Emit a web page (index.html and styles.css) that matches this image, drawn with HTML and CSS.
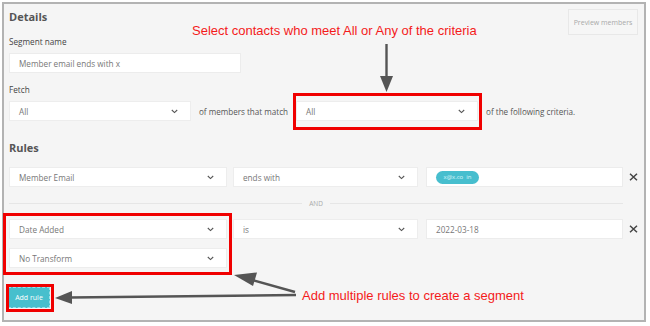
FILE: index.html
```html
<!DOCTYPE html>
<html>
<head>
<meta charset="utf-8">
<link rel="stylesheet" href="styles.css">
</head>
<body>
<div class="frame">
  <div class="head">
    <h2 class="title">Details</h2>
    <div class="preview">Preview members</div>
  </div>
  <div class="lbl">Segment name</div>
  <div class="input name">Member email ends with x</div>
  <div class="lbl lbl-fetch">Fetch</div>
  <div class="fetch-row">
    <div class="sel w182"><span>All</span><svg class="chev" width="7" height="5" viewBox="0 0 7 5"><path d="M0.8 1 L3.5 3.6 L6.2 1" fill="none" stroke="#555" stroke-width="1.1"/></svg></div>
    <span class="txt">of members that match</span>
    <div class="sel w182 hl hl-fetch"><span>All</span><svg class="chev" width="7" height="5" viewBox="0 0 7 5"><path d="M0.8 1 L3.5 3.6 L6.2 1" fill="none" stroke="#555" stroke-width="1.1"/></svg></div>
    <span class="txt">of the following criteria.</span>
  </div>
  <h2 class="title rules">Rules</h2>
  <div class="rule-row first">
    <div class="col1">
      <div class="sel"><span>Member Email</span><svg class="chev" width="7" height="5" viewBox="0 0 7 5"><path d="M0.8 1 L3.5 3.6 L6.2 1" fill="none" stroke="#555" stroke-width="1.1"/></svg></div>
    </div>
    <div class="sel w185"><span>ends with</span><svg class="chev" width="7" height="5" viewBox="0 0 7 5"><path d="M0.8 1 L3.5 3.6 L6.2 1" fill="none" stroke="#555" stroke-width="1.1"/></svg></div>
    <div class="input val"><span class="chip">x@x.co &nbsp;in</span></div>
    <div class="rm"><svg width="9" height="8" viewBox="0 0 9 8"><path d="M1 0.8 L8 7.2 M8 0.8 L1 7.2" stroke="#444" stroke-width="1.5"/></svg></div>
  </div>
  <div class="divider"><span class="line"></span><span class="and">AND</span><span class="line"></span></div>
  <div class="rule-row">
    <div class="col1 hl hl-col">
      <div class="sel"><span>Date Added</span><svg class="chev" width="7" height="5" viewBox="0 0 7 5"><path d="M0.8 1 L3.5 3.6 L6.2 1" fill="none" stroke="#555" stroke-width="1.1"/></svg></div>
      <div class="sel"><span>No Transform</span><svg class="chev" width="7" height="5" viewBox="0 0 7 5"><path d="M0.8 1 L3.5 3.6 L6.2 1" fill="none" stroke="#555" stroke-width="1.1"/></svg></div>
    </div>
    <div class="sel w185"><span>is</span><svg class="chev" width="7" height="5" viewBox="0 0 7 5"><path d="M0.8 1 L3.5 3.6 L6.2 1" fill="none" stroke="#555" stroke-width="1.1"/></svg></div>
    <div class="input val"><span>2022-03-18</span></div>
    <div class="rm"><svg width="9" height="8" viewBox="0 0 9 8"><path d="M1 0.8 L8 7.2 M8 0.8 L1 7.2" stroke="#444" stroke-width="1.5"/></svg></div>
  </div>
  <div class="add-wrap"><div class="add hl hl-add">Add rule</div></div>
</div>

<div class="note note-top">Select contacts who meet All or Any of the criteria</div>
<div class="note note-bottom">Add multiple rules to create a segment</div>
<svg class="arrows" width="650" height="326" viewBox="0 0 650 326">
  <g fill="#555" stroke="#555">
    <line x1="386.5" y1="44" x2="386.5" y2="78" stroke-width="2.4"/>
    <polygon points="380,76 393,76 386.5,92" stroke="none"/>
    <line x1="295" y1="292" x2="252" y2="280" stroke-width="2.4"/>
    <polygon points="234,275 257,272.5 253,286" stroke="none"/>
    <line x1="296" y1="295" x2="70" y2="297.5" stroke-width="2.4"/>
    <polygon points="55,298 72,291 72,304" stroke="none"/>
  </g>
</svg>
</body>
</html>
```

FILE: styles.css
```css
html, body {
  margin: 0;
  padding: 0;
}
body {
  position: relative;
  width: 650px;
  height: 326px;
  overflow: hidden;
  background: #ffffff;
  font-family: "Open Sans", "Noto Sans", sans-serif;
}
.frame {
  box-sizing: border-box;
  margin: 2px;
  width: 644px;
  height: 320px;
  border: 2px solid #b3b3b3;
  background: #f5f5f5;
  padding: 5px 6px 0 5px;
}
.head {
  display: flex;
  justify-content: space-between;
  align-items: flex-start;
  height: 26px;
}
.title {
  margin: 1px 0 0;
  font-size: 11px;
  font-weight: 700;
  line-height: 14px;
  color: #555;
}
.preview {
  box-sizing: border-box;
  width: 70px;
  height: 26px;
  border: 1px solid #e8e8e8;
  background: #f6f6f6;
  color: #a9a9a9;
  font-size: 7px;
  display: flex;
  align-items: center;
  justify-content: center;
}
.lbl {
  margin-top: 1px;
  font-size: 8.2px;
  line-height: 12px;
  color: #444;
}
.lbl-fetch {
  margin-top: 11px;
}
.input {
  box-sizing: border-box;
  height: 20px;
  background: #fff;
  border: 1px solid #ececec;
  padding-left: 9px;
  font-size: 8.2px;
  color: #777;
  display: flex;
  align-items: center;
}
.name {
  width: 232px;
  margin-top: 5px;
}
.fetch-row {
  display: flex;
  align-items: center;
  gap: 8px;
  margin-top: 5px;
}
.txt {
  font-size: 8.1px;
  color: #555;
}
.sel {
  box-sizing: border-box;
  height: 20px;
  background: #fff;
  border: 1px solid #ededed;
  display: flex;
  align-items: center;
  justify-content: space-between;
  padding: 0 12px 0 9px;
  font-size: 8.2px;
  color: #777;
}
.w182 { width: 182px; }
.w185 { width: 185px; }
.rules {
  margin-top: 20px;
}
.rule-row {
  display: flex;
  align-items: flex-start;
}
.rule-row.first {
  margin-top: 12px;
}
.col1 {
  width: 218px;
  display: flex;
  flex-direction: column;
  gap: 9px;
  margin-right: 6px;
}
.rule-row > .w185 {
  margin-right: 8px;
}
.val {
  width: 197px;
}
.chip {
  display: inline-flex;
  align-items: center;
  justify-content: center;
  width: 43px;
  height: 13px;
  border-radius: 7px;
  background: #47bece;
  color: #d9f6fa;
  font-size: 6px;
}
.rm {
  width: 15px;
  height: 20px;
  box-sizing: border-box;
  padding-left: 6px;
  display: flex;
  align-items: center;
}
.divider {
  width: 614px;
  height: 32px;
  display: flex;
  align-items: center;
}
.line {
  flex: 1;
  height: 1px;
  background: #e6e6e6;
}
.and {
  padding: 0 7px;
  font-size: 6.5px;
  color: #aaa;
}
.add-wrap {
  margin-top: 19px;
  display: flex;
}
.add {
  box-sizing: border-box;
  margin-left: -1px;
  width: 42px;
  height: 21px;
  background: #47bfcd;
  border: 1px dashed #9adfe8;
  color: #fff;
  font-size: 7px;
  display: flex;
  align-items: center;
  justify-content: center;
}
.hl {
  position: relative;
}
.hl::after {
  content: "";
  position: absolute;
  border: 3px solid #f00000;
  pointer-events: none;
}
.hl-fetch::after {
  left: -4px;
  right: -5px;
  top: -9px;
  bottom: -10px;
}
.hl-col::after {
  left: -6px;
  right: -5px;
  top: -6px;
  bottom: -7px;
}
.hl-add::after {
  left: -3px;
  right: -5px;
  top: -4px;
  bottom: -5px;
}
.note {
  position: absolute;
  font-family: "Liberation Sans", Arial, sans-serif;
  font-size: 13px;
  line-height: 15px;
  color: #f41b1b;
  white-space: nowrap;
}
.note-top {
  left: 192px;
  top: 23px;
}
.note-bottom {
  left: 302px;
  top: 288px;
}
.arrows {
  position: absolute;
  left: 0;
  top: 0;
  pointer-events: none;
}
```
